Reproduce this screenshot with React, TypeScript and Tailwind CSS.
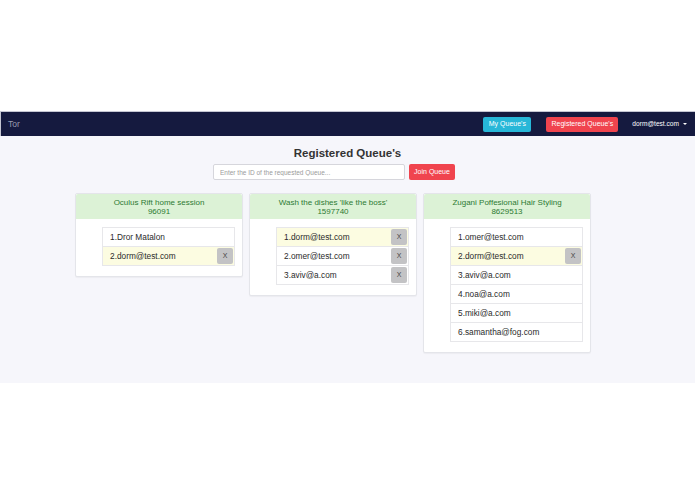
import React from "react";

type Member = { name: string; mine?: boolean; removable?: boolean };

type Queue = { title: string; id: string; members: Member[] };

const queues: Queue[] = [
  {
    title: "Oculus Rift home session",
    id: "96091",
    members: [{ name: "Dror Matalon" }, { name: "dorm@test.com", mine: true, removable: true }],
  },
  {
    title: "Wash the dishes 'like the boss'",
    id: "1597740",
    members: [
      { name: "dorm@test.com", mine: true, removable: true },
      { name: "omer@test.com", removable: true },
      { name: "aviv@a.com", removable: true },
    ],
  },
  {
    title: "Zugani Poffesional Hair Styling",
    id: "8629513",
    members: [
      { name: "omer@test.com" },
      { name: "dorm@test.com", mine: true, removable: true },
      { name: "aviv@a.com" },
      { name: "noa@a.com" },
      { name: "miki@a.com" },
      { name: "samantha@fog.com" },
    ],
  },
];

function NavBar() {
  return (
    <nav className="flex h-[25px] items-center border-t border-l border-[#c4c6d2] bg-[#151a3f] pl-[7px] pr-[8px]">
      <span className="text-[8.5px] text-[#9b9db0]">Tor</span>
      <div className="ml-auto flex items-center">
        <button className="h-[15px] w-[48px] rounded-[2px] bg-[#27b7d8] text-[7px] text-white">
          My Queue's
        </button>
        <button className="ml-[15px] h-[15px] w-[72px] rounded-[2px] bg-[#f0444e] text-[7px] text-white">
          Registered Queue's
        </button>
        <span className="ml-[14px] flex items-center text-[6.6px] text-white">
          dorm@test.com
          <span className="ml-[4px] inline-block h-0 w-0 border-x-[2px] border-t-[2.5px] border-x-transparent border-t-white" />
        </span>
      </div>
    </nav>
  );
}

function QueuePanel({ queue }: { queue: Queue }) {
  return (
    <div className="w-[168px] rounded-[2px] border border-[#e4e5ea] bg-white shadow-[0_1px_1px_rgba(0,0,0,0.04)]">
      <div className="h-[25px] rounded-t-[2px] bg-[#dcf2d6] pt-[4px] text-center text-[8px] leading-[9px] text-[#2c7a33]">
        <div>{queue.title}</div>
        <div>{queue.id}</div>
      </div>
      <div className="mt-[8px] mb-[10px] ml-[26px] mr-[7px]">
        {queue.members.map((m, i) => (
          <div
            key={i}
            className={
              "flex h-[20px] items-center border border-[#e7e7ea] pl-[7px] pr-[1px] text-[8.3px] text-[#2a2a2a] " +
              (i > 0 ? "-mt-px " : "") +
              (m.mine ? "bg-[#fcfce1]" : "bg-white")
            }
          >
            <span>
              {i + 1}.{m.name}
            </span>
            {m.removable ? (
              <button className="ml-auto h-[16px] w-[16px] rounded-[2px] bg-[#c3c3c5] text-[7px] text-[#444]">
                X
              </button>
            ) : null}
          </div>
        ))}
      </div>
    </div>
  );
}

export default function App() {
  return (
    <div className="h-[494px] w-[695px] bg-white font-['Liberation_Sans',Arial,sans-serif]">
      <div className="h-[111px]" />
      <NavBar />
      <main className="h-[247px] bg-[#f6f6fb] pt-[10px]">
        <h2 className="text-center text-[11.5px] leading-[14px] font-bold text-[#333]">Registered Queue's</h2>
        <div className="mt-[4px] flex pl-[213px]">
          <input
            className="h-[16px] w-[192px] rounded-[2px] border border-[#d6d6dc] bg-white px-[6px] text-[6.5px] text-[#555] placeholder:text-[#9a9a9a] outline-none"
            placeholder="Enter the ID of the requested Queue..."
          />
          <button className="ml-[4px] h-[16px] w-[46px] rounded-[2px] bg-[#f0444e] text-[7px] text-white">
            Join Queue
          </button>
        </div>
        <div className="mt-[13px] flex items-start gap-[6px] pl-[75px]">
          {queues.map((q) => (
            <QueuePanel key={q.id} queue={q} />
          ))}
        </div>
      </main>
    </div>
  );
}
